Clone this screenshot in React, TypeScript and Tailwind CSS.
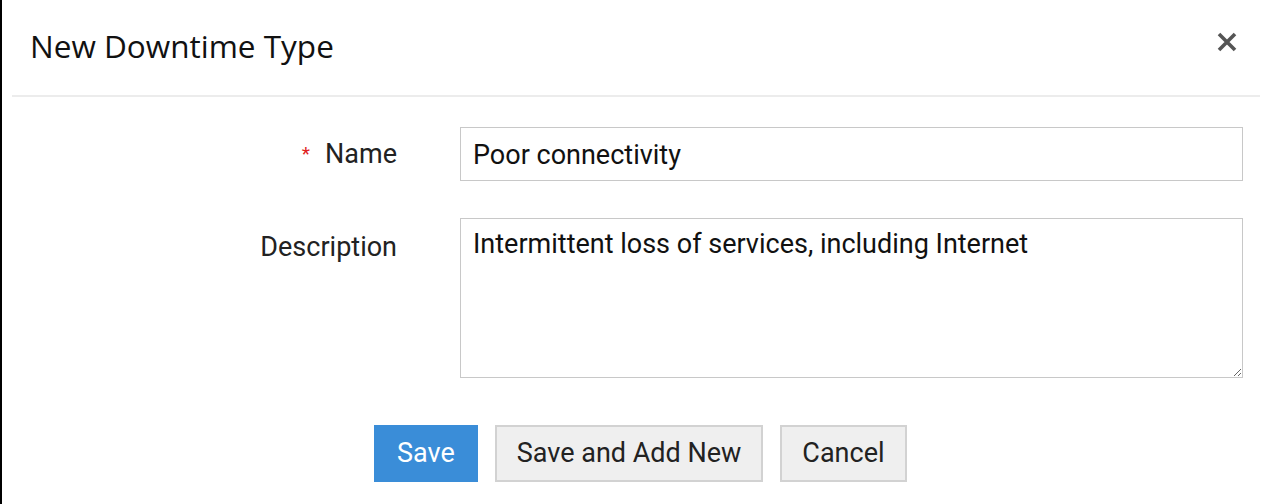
import React from 'react';

const roboto = { fontFamily: 'Roboto, "Liberation Sans", sans-serif' };

const App: React.FC = () => {
    return (
        <div className="w-[1270px] h-[504px] bg-white border-l-2 border-black overflow-hidden" style={roboto}>
            <div className="mx-[10px] h-[97px] border-b-2 border-[#ececec] flex items-center justify-between pl-[18px] pr-[22px]">
                <h1 className="text-[31.5px] text-[#111] pb-[4px]" style={{ fontFamily: '"Open Sans", sans-serif' }}>
                    New Downtime Type
                </h1>
                <button className="text-[#555] -mt-[12px]" aria-label="Close">
                    <svg width="22" height="22" viewBox="0 0 22 22">
                        <path d="M3 3 L19 19 M19 3 L3 19" stroke="#555" strokeWidth="3.6" strokeLinecap="butt" />
                    </svg>
                </button>
            </div>

            <div className="pt-[30px] flex flex-col gap-[37px]">
                <div className="flex items-center">
                    <label className="w-[395px] text-right text-[27px] text-[#222] flex items-center justify-end gap-[15px]">
                        <span className="text-[#e02020] text-[19px]">*</span>
                        <span>Name</span>
                    </label>
                    <input
                        className="ml-[63px] w-[783px] h-[54px] border border-[#c8c8c8] px-[12px] pt-[2px] text-[27px] text-[#111] outline-none"
                        defaultValue="Poor connectivity"
                    />
                </div>
                <div className="flex items-start">
                    <label className="w-[395px] text-right text-[27px] text-[#222] pt-[9px]">Description</label>
                    <textarea
                        className="ml-[63px] w-[783px] h-[160px] border border-[#c8c8c8] px-[12px] py-[5px] text-[27px] text-[#111] outline-none resize-y"
                        defaultValue="Intermittent loss of services, including Internet"
                    />
                </div>
            </div>

            <div className="mt-[47px] flex gap-[17px] pl-[372px]">
                <button className="h-[57px] px-[22px] bg-[#3a8dd8] border border-[#3a8dd8] text-white text-[27px]">Save</button>
                <button className="h-[57px] px-[20px] bg-[#efefef] border-2 border-[#d2d2d2] text-[#222] text-[27px]">Save and Add New</button>
                <button className="h-[57px] px-[20px] bg-[#efefef] border-2 border-[#d2d2d2] text-[#222] text-[27px]">Cancel</button>
            </div>
        </div>
    );
};

export default App;
